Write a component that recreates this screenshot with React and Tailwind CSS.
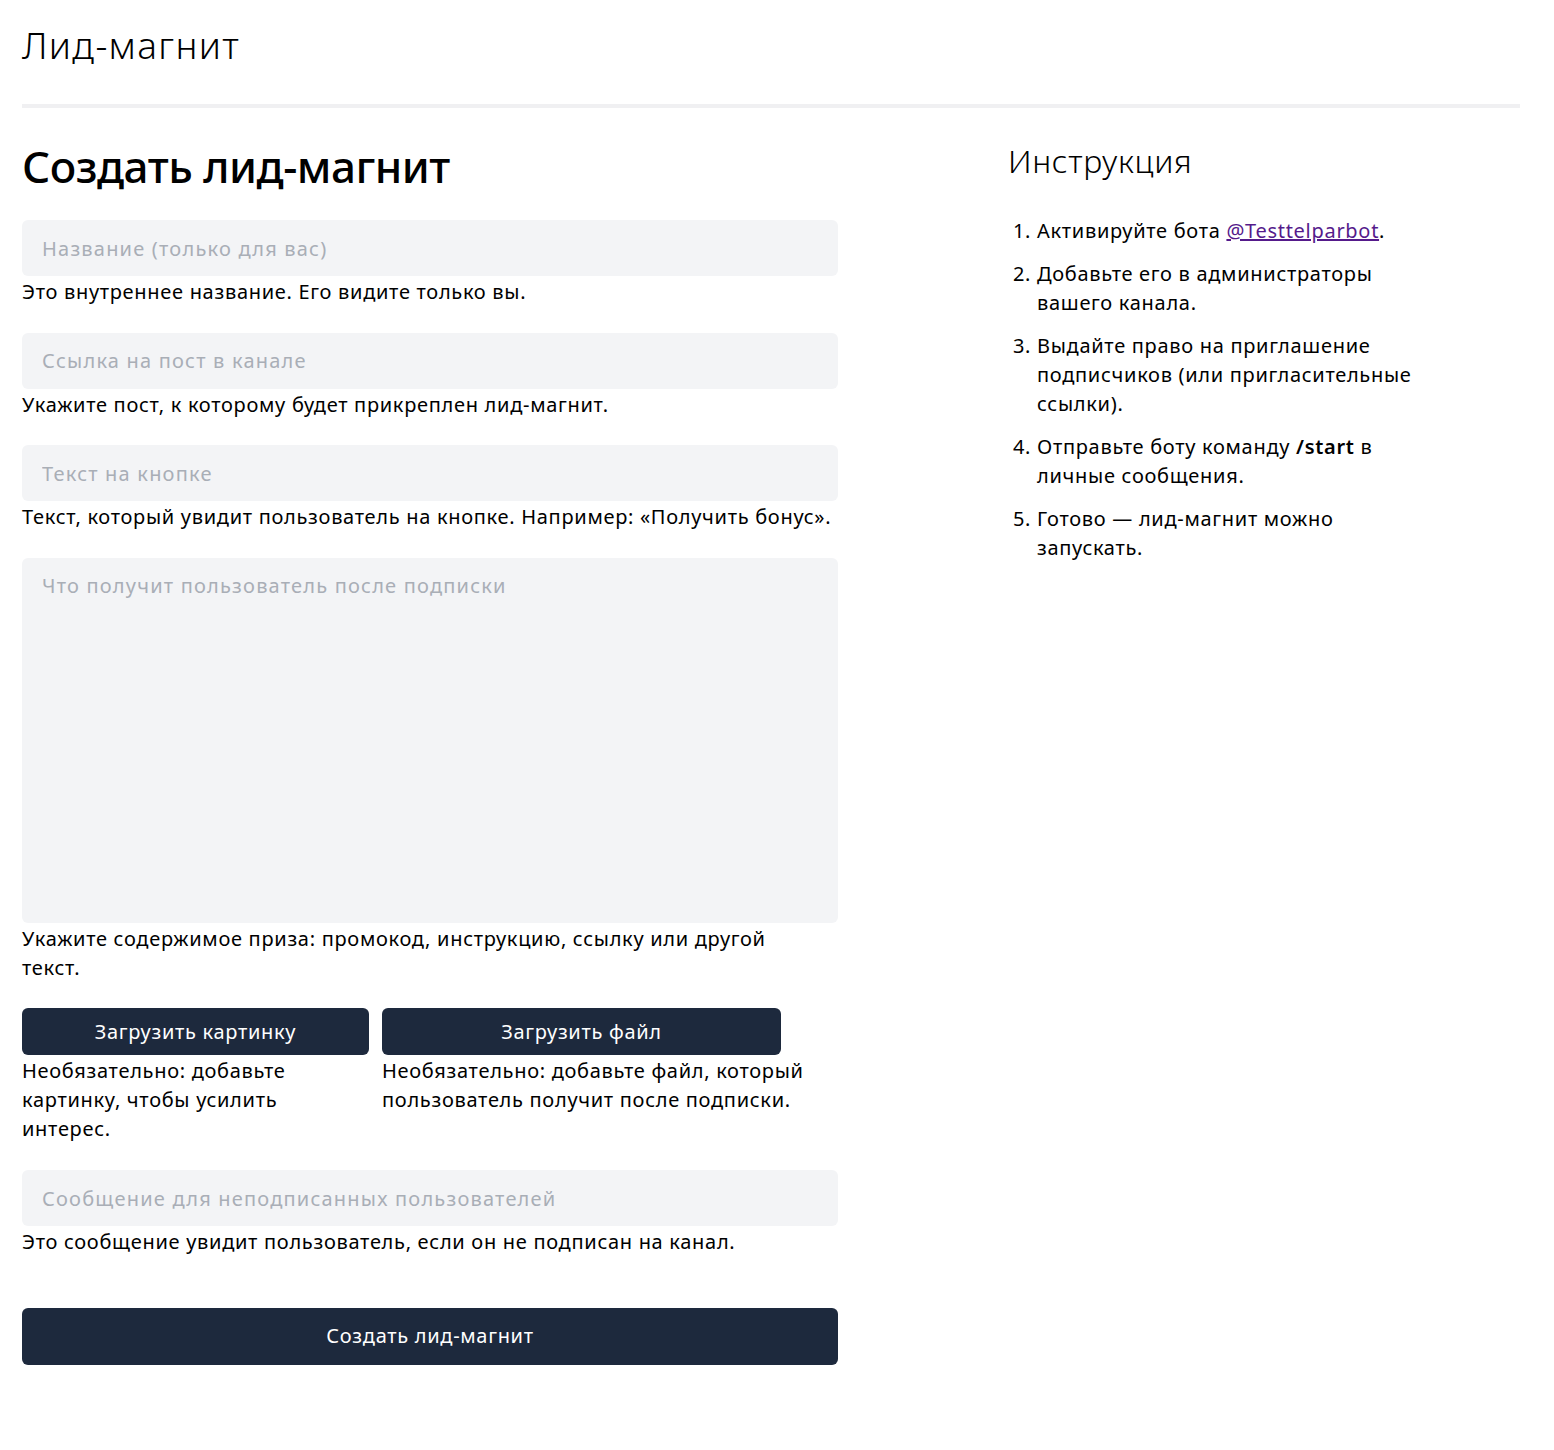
import React from 'react';

const body = "font-['Noto_Sans','Liberation_Sans',sans-serif] tracking-[0.7px]";
const ph = "placeholder:text-[#a9aeb6] tracking-[1.2px]";

function Field({ placeholder, hint, area, narrow }) {
  return (
    <div className="flex flex-col mb-[26.5px]">
      {area ? (
        <textarea
          placeholder={placeholder}
          className={`h-[365px] w-full resize-none rounded-md bg-gray-100 px-5 py-[13px] text-[20px] outline-none ${ph}`}
        />
      ) : (
        <input
          placeholder={placeholder}
          className={`h-[56px] w-full rounded-md bg-gray-100 px-5 text-[20px] outline-none ${ph}`}
        />
      )}
      <p className={`pt-[1px] text-[20px] leading-[29px] text-black ${narrow ? 'pr-[40px]' : ''}`}>{hint}</p>
    </div>
  );
}

const steps = [
  <>Активируйте бота <a href="#" className="text-[#551a8b] underline">@Testtelparbot</a>.</>,
  <>Добавьте его в администраторы вашего канала.</>,
  <>Выдайте право на приглашение подписчиков (или пригласительные ссылки).</>,
  <>Отправьте боту команду <b className="font-semibold">/start</b> в личные сообщения.</>,
  <>Готово — лид-магнит можно запускать.</>,
];

export default function App() {
  return (
    <div className={`min-h-[1450px] bg-white px-[22px] text-black ${body}`}>
      {/* Page header */}
      <div className="w-[1498px] pt-[24px] pb-[38px] border-b-4 border-[#f0f0f2]">
        <h1 className="text-[37px] leading-[42px] font-light tracking-[1.3px]">Лид-магнит</h1>
      </div>

      <div className="flex">
        {/* Form */}
        <div className="w-[816px] shrink-0">
          <h2 className="mt-[30px] mb-[26px] text-[44px] leading-[56px] font-medium tracking-[-0.5px]">Создать лид-магнит</h2>

          <Field placeholder="Название (только для вас)" hint="Это внутреннее название. Его видите только вы." />
          <Field placeholder="Ссылка на пост в канале" hint="Укажите пост, к которому будет прикреплен лид-магнит." />
          <Field placeholder="Текст на кнопке" hint="Текст, который увидит пользователь на кнопке. Например: «Получить бонус»." />
          <Field area narrow placeholder="Что получит пользователь после подписки" hint="Укажите содержимое приза: промокод, инструкцию, ссылку или другой текст." />

          <div className="flex gap-[13px] mb-[27px]">
            <div className="w-[347px]">
              <button className="h-[47px] w-full rounded-md bg-slate-800 text-[20px] text-white">Загрузить картинку</button>
              <p className="pt-[1px] pr-[40px] text-[20px] leading-[29px]">Необязательно: добавьте картинку, чтобы усилить интерес.</p>
            </div>
            <div className="w-[440px]">
              <button className="h-[47px] w-[399px] rounded-md bg-slate-800 text-[20px] text-white">Загрузить файл</button>
              <p className="pt-[1px] text-[20px] leading-[29px]">Необязательно: добавьте файл, который пользователь получит после подписки.</p>
            </div>
          </div>

          <Field placeholder="Сообщение для неподписанных пользователей" hint="Это сообщение увидит пользователь, если он не подписан на канал." />

          <button className="mt-[25px] h-[57px] w-full rounded-md bg-slate-800 text-[20px] text-white">Создать лид-магнит</button>
        </div>

        {/* Instructions */}
        <div className="ml-[170px] w-[425px] pt-[32px]">
          <h3 className="text-[32px] leading-[42px] font-light">Инструкция</h3>
          <ol className="mt-[34px] flex flex-col gap-[14px] list-decimal pl-[29px] text-[20px] leading-[29px]">
            {steps.map((s, i) => (
              <li key={i}>{s}</li>
            ))}
          </ol>
        </div>
      </div>
    </div>
  );
}
